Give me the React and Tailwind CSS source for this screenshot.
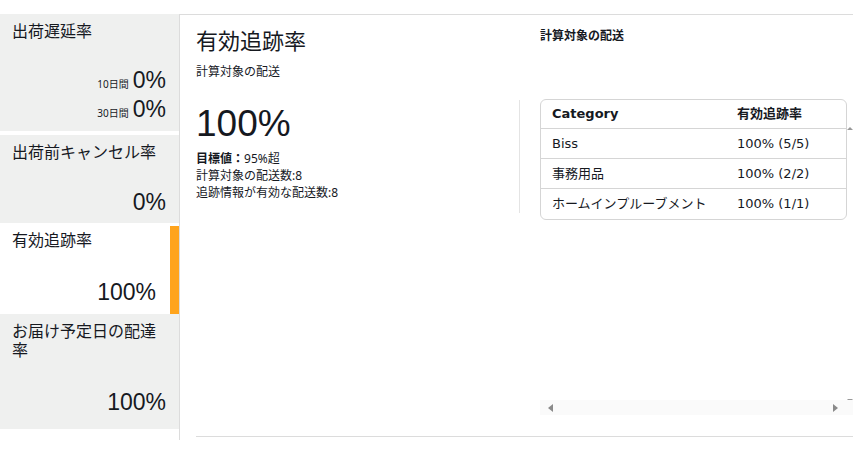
const jp = { fontFamily: '"Noto Sans", "Noto Sans CJK JP", sans-serif' }
const num = { fontFamily: '"Liberation Sans", Arial, sans-serif' }
const tbl = { fontFamily: '"DejaVu Sans", "Noto Sans CJK JP", sans-serif' }

function SideItem({ label, active, children, height }) {
  return (
    <div
      className={`relative px-3 pt-[8px] ${active ? 'bg-white' : 'bg-[#eff0ef]'} ${height}`}
    >
      <div className="text-[16px] leading-[19px] text-[#16191f] pr-2">{label}</div>
      {children}
      {active && <div className="absolute right-0 top-[3px] bottom-0 w-[9px] bg-[#ffa41c]" />}
    </div>
  )
}

const rows = [
  ['Biss', '100% (5/5)'],
  ['事務用品', '100% (2/2)'],
  ['ホームインプルーブメント', '100% (1/1)'],
]

export default function App() {
  return (
    <div className="w-[853px] h-[460px] bg-white text-[#16191f] pt-[14px] flex overflow-hidden" style={jp}>
      {/* サイドバー */}
      <aside className="w-[179px] shrink-0 flex flex-col">
        <SideItem label="出荷遅延率" height="h-[117px]">
          <div className="flex flex-col items-end pr-[1px] mt-[22px]">
            <div className="flex items-baseline gap-1 h-[29px]">
              <span className="text-[10px]">10日間</span>
              <span className="text-[23px]" style={num}>0%</span>
            </div>
            <div className="flex items-baseline gap-1 h-[29px]">
              <span className="text-[10px]">30日間</span>
              <span className="text-[23px]" style={num}>0%</span>
            </div>
          </div>
        </SideItem>
        <div className="h-[4px]" />
        <SideItem label="出荷前キャンセル率" height="h-[88px]">
          <div className="text-right text-[23px] pr-[1px] mt-[23px]" style={num}>0%</div>
        </SideItem>
        <SideItem label="有効追跡率" active height="h-[91px]">
          <div className="text-right text-[23px] pr-[11px] mt-[25px]" style={num}>100%</div>
        </SideItem>
        <SideItem label="お届け予定日の配達率" height="h-[115px]">
          <div className="text-right text-[23px] pr-[1px] mt-[25px]" style={num}>100%</div>
        </SideItem>
      </aside>

      {/* メイン */}
      <main className="flex-1 h-[426px] border-l border-t border-[#dcdcdc] pl-[16px]">
        <div className="h-[422px] border-b border-[#dcdcdc] flex">
          <section className="w-[344px] shrink-0 pr-[20px]">
            <h1 className="text-[22px] leading-[28px] mt-[11px] font-normal">有効追跡率</h1>
            <p className="text-[12px] leading-[16px] mt-[10px]">計算対象の配送</p>
            <div className="mt-[20px] h-[113px] border-r border-[#e4e4e4]">
              <div className="text-[37px] leading-[44px] pt-[2px]" style={num}>100%</div>
              <div className="text-[12px] leading-[17px] mt-[4px]">
                <div><span className="font-bold">目標値：</span>95%超</div>
                <div>計算対象の配送数:8</div>
                <div>追跡情報が有効な配送数:8</div>
              </div>
            </div>
          </section>

          <section className="flex-1 relative">
            <h2 className="text-[12px] leading-[16px] font-bold mt-[13px]">計算対象の配送</h2>
            <div className="mt-[55px] w-[307px] border border-[#d5d5d5] rounded-[6px] text-[13px]" style={tbl}>
              <div className="flex h-[29px] items-center font-bold border-b border-[#d5d5d5]">
                <div className="w-[196px] pl-[11px]">Category</div>
                <div>有効追跡率</div>
              </div>
              {rows.map(([c, v], i) => (
                <div
                  key={c}
                  className={`flex h-[30px] items-center ${i < rows.length - 1 ? 'border-b border-[#d5d5d5]' : ''}`}
                >
                  <div className="w-[196px] pl-[11px]">{c}</div>
                  <div>{v}</div>
                </div>
              ))}
            </div>

            {/* 縦スクロールの矢印 */}
            <div className="absolute right-0 top-[112px] w-0 h-0 border-l-[3px] border-r-[3px] border-b-[3px] border-l-transparent border-r-transparent border-b-[#999]" />
            <div className="absolute right-0 top-[384px] w-0 h-0 border-l-[3px] border-r-[3px] border-t-[3px] border-l-transparent border-r-transparent border-t-[#999]" />

            {/* 横スクロールバー */}
            <div className="absolute left-0 right-0 top-[385px] h-[15px] bg-[#fafafa] flex items-center justify-between px-[8px]">
              <div className="w-0 h-0 border-t-[4px] border-b-[4px] border-r-[5px] border-t-transparent border-b-transparent border-r-[#8a8a8a]" />
              <div className="w-0 h-0 border-t-[4px] border-b-[4px] border-l-[5px] border-t-transparent border-b-transparent border-l-[#8a8a8a] mr-[7px]" />
            </div>
          </section>
        </div>
      </main>
    </div>
  )
}
